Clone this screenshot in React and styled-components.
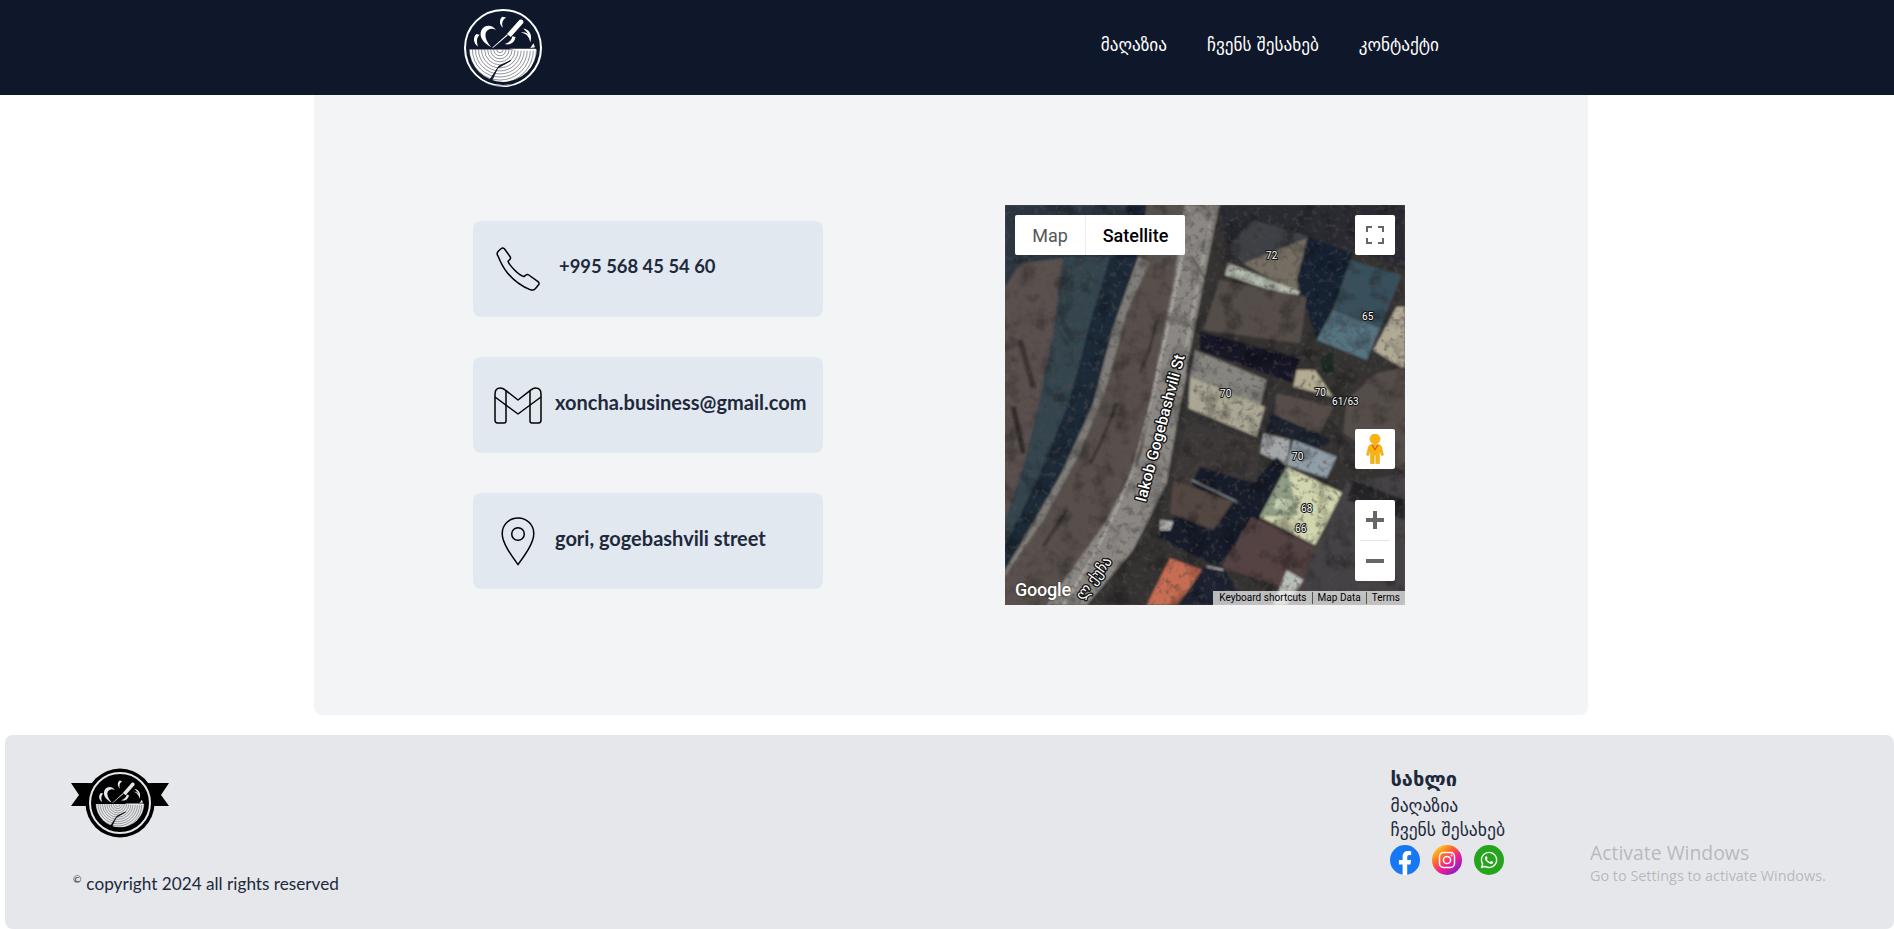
import React, { useId } from "react";
import styled, { createGlobalStyle } from "styled-components";
import { FaWhatsapp } from "react-icons/fa";

const Global = createGlobalStyle`
  html, body { margin: 0; padding: 0; background: #fff; overflow: hidden; }
  * { box-sizing: border-box; }
  body { font-family: "Lato", "DejaVu Sans", sans-serif; color: #111827; }
`;

const Page = styled.div`
  position: relative;
  width: 1894px;
  height: 929px;
  overflow: hidden;
`;

const Header = styled.header`
  height: 95px;
  background: #0f172a;
  display: flex;
  align-items: center;
  padding: 0 455px 0 464px;
  justify-content: space-between;
`;

const Nav = styled.nav`
  display: flex;
  gap: 40px;
  padding-bottom: 6px;
`;

const NavLink = styled.a`
  color: #fff;
  font: 400 17.2px "DejaVu Sans", sans-serif;
`;

const Panel = styled.main`
  margin: 0 0 20px 314px;
  width: 1274px;
  height: 620px;
  background: #f3f4f6;
  border-radius: 0 0 8px 8px;
  display: flex;
  align-items: center;
  padding-left: 159px;
  gap: 182px;
`;

const Cards = styled.div`
  display: flex;
  flex-direction: column;
  gap: 40px;
`;

const Card = styled.div`
  width: 350px;
  height: 96px;
  background: #e2e8f0;
  border-radius: 8px;
  display: flex;
  align-items: center;
  padding-left: 21px;
  gap: ${(p) => p.$gap}px;
`;

const IconSlot = styled.span`
  width: 48px;
  display: flex;
  justify-content: center;
  flex: none;
`;

const CardText = styled.span`
  font: 700 ${(p) => p.$size || 20}px "Lato", sans-serif;
  color: #1e293b;
  padding-bottom: 6px;
`;

const MapBox = styled.div`
  position: relative;
  width: 400px;
  height: 400px;
  overflow: hidden;
  background: #333;
  flex: none;
  font-family: "Roboto", sans-serif;
`;

const MapArt = styled.svg`
  display: block;
  width: 400px;
  height: 400px;
`;

const MapTypes = styled.div`
  position: absolute;
  left: 10px;
  top: 10px;
  height: 40px;
  display: flex;
  background: #fff;
  border-radius: 2px;
`;

const MapType = styled.div`
  width: ${(p) => (p.$active ? 100 : 70)}px;
  display: flex;
  align-items: center;
  justify-content: center;
  font-size: 18px;
  font-weight: ${(p) => (p.$active ? 500 : 400)};
  color: ${(p) => (p.$active ? "#000" : "#565656")};
  border-left: ${(p) => (p.$active ? "1px solid #eee" : "none")};
`;

const MapButton = styled.div`
  position: absolute;
  right: 10px;
  top: ${(p) => p.$top}px;
  width: 40px;
  height: 40px;
  background: #fff;
  border-radius: 2px;
  display: flex;
  align-items: center;
  justify-content: center;
`;

const ZoomBox = styled.div`
  position: absolute;
  right: 10px;
  top: 295px;
  width: 40px;
  height: 81px;
  background: #fff;
  border-radius: 2px;
  display: flex;
  flex-direction: column;
  align-items: center;
`;

const ZoomStep = styled.div`
  height: 40px;
  display: flex;
  align-items: center;
  justify-content: center;
`;

const ZoomRule = styled.div`
  width: 30px;
  height: 1px;
  background: #e6e6e6;
`;

const GoogleMark = styled.div`
  position: absolute;
  left: 10px;
  bottom: 5px;
  color: #fff;
  font: 500 18px "Roboto", sans-serif;
  letter-spacing: -0.2px;
  text-shadow: 0 0 2px rgba(0, 0, 0, 0.6);
`;

const Attribution = styled.div`
  position: absolute;
  right: 0;
  bottom: 0;
  height: 14px;
  width: 192px;
  background: rgba(245, 245, 245, 0.72);
  display: flex;
  align-items: center;
  justify-content: flex-end;
  font-size: 10px;
  color: #000;
  white-space: nowrap;
`;

const AttrItem = styled.span`
  padding: 0 5px;
  line-height: 12px;
  letter-spacing: 0.03px;
  & + & { border-left: 1px solid #555; }
`;

const Footer = styled.footer`
  margin-left: 5px;
  height: 194px;
  background: #e5e7eb;
  border-radius: 8px;
  display: flex;
  justify-content: space-between;
  padding: 33px 0 0 66px;
`;

const Brand = styled.div`
  display: flex;
  flex-direction: column;
`;

const Copy = styled.p`
  margin: 35px 0 0 2px;
  font: 400 17.2px "Lato", sans-serif;
  color: #1e293b;
  white-space: nowrap;
`;

const CopyMark = styled.sup`
  font-size: 10px;
  margin-right: 5px;
  line-height: 0;
`;

const Links = styled.div`
  margin: -2px 389px 0 0;
  display: flex;
  flex-direction: column;
  font-family: "DejaVu Sans", sans-serif;
  color: #1e293b;
`;

const LinkTitle = styled.div`
  font-size: 20px;
  font-weight: 700;
  line-height: 26px;
  margin-bottom: 2px;
`;

const LinkItem = styled.div`
  font-size: 17.6px;
  line-height: 24px;
  white-space: nowrap;
`;

const Socials = styled.div`
  display: flex;
  gap: 12px;
  margin-top: 3px;
`;

const Watermark = styled.div`
  position: absolute;
  left: 1590px;
  top: 839px;
  color: rgba(110, 110, 110, 0.4);
  font-family: "Open Sans", sans-serif;
  pointer-events: none;
`;

const WatermarkTitle = styled.div`
  font-size: 19.4px;
  line-height: 27px;
`;

const WatermarkText = styled.div`
  font-size: 14.4px;
  line-height: 19px;
`;

function LogoMark({ disc, mark }) {
  const id = useId();
  const rings = [];
  for (let r = 4; r < 50; r += 3.9) rings.push(r);
  return (
    <>
      <defs>
        <clipPath id={id}>
          <path d="M6 52 H94 V100 H6Z" />
        </clipPath>
      </defs>
      <g clipPath={`url(#${id})`}>
        <circle cx="50" cy="50" r="43.5" fill={mark} />
        {rings.map((r) => (
          <circle key={r} cx="46" cy="52" r={r} fill="none" stroke={disc} strokeWidth="0.6" />
        ))}
        <path d="M35 93 L43 76 L60 66 L45 73 L33 91Z" fill={disc} stroke={disc} strokeWidth="1.2" />
      </g>
      <g fill={mark}>
        <path d="M35 49 C25 44 19 36 22 28 C25 20 36 19 41 27 C36 24 31 25 28 30 C26 36 30 43 35 49Z" />
        <path d="M71 14 C74 12 77 15 76 18 L60 36 L55 32Z" />
        <path d="M56 34 L37 50 L36.4 49.4 L55 32.6Z" />
        <path d="M49 10 C45 14 45 20 50 24 C48 19 49 14 54 11Z" />
        <path d="M16 32 C11 36 12 44 18 48 C16 42 16 37 20 33Z" />
        <path d="M66 36 C65 43 59 47 52 45 C58 43 61 40 62 35Z" />
        <path d="M76 25 C84 26 88 33 85 43 C84 36 80 31 73 30 C78 29 82 31 84 35 C81 30 79 28 76 25Z" />
        <path d="M89 44 L91 49 L85 50Z" />
        <path d="M58 51 H92 V53.5 H70Z" />
      </g>
    </>
  );
}

const HeaderLogo = () => (
  <svg width="78" height="78" viewBox="0 0 100 100">
    <circle cx="50" cy="50" r="48.7" fill="none" stroke="#fff" strokeWidth="2.6" />
    <LogoMark disc="#0f172a" mark="#fff" />
  </svg>
);

const FooterLogo = () => (
  <svg width="98" height="70" viewBox="0 0 98 70">
    <path d="M0 15 H98 L90 27 L98 38 H0 L8 27Z" fill="#000" />
    <circle cx="49" cy="35" r="34.5" fill="#000" />
    <circle cx="49" cy="35" r="30" fill="none" stroke="#e5e7eb" strokeWidth="2" />
    <svg x="21" y="7" width="56" height="56" viewBox="0 0 100 100">
      <LogoMark disc="#000" mark="#e5e7eb" />
    </svg>
  </svg>
);

const PhoneIcon = () => (
  <svg width="44" height="44" viewBox="0 0 44 44" fill="none" stroke="#000" strokeWidth="1.5" strokeLinejoin="round">
    <path d="M2 9 C0.5 7 1 5.5 2.5 4 L5 1.7 C6.3 0.6 7.6 0.8 8.6 2 L14 9.5 C14.8 10.7 14.6 11.9 13.6 12.8 L12 14.2 C12.6 16 16 20.5 18.5 23 C21.5 26 26 29 28 29.6 L29.6 28.2 C30.6 27.3 31.7 27.2 32.8 28 L42 34.6 C43.3 35.6 43.4 36.8 42.4 38 L39.5 41.5 C38 43.2 36 43.4 34 42.6 C25 39 17 32.5 11.5 26 C7.5 21 4 14 2 9Z" />
  </svg>
);

const MailIcon = () => (
  <svg width="48" height="37" viewBox="0 0 48 37" fill="none" stroke="#000" strokeWidth="1.5" strokeLinejoin="round">
    <path d="M1 33 V7 C1 3 3.5 1 6.5 1 C8 1 9.5 1.6 11 2.8 L24 13 L37 2.8 C38.5 1.6 40 1 41.5 1 C44.5 1 47 3 47 7 V33 C47 35 46 36 44.5 36 H38 C36.5 36 36 35 36 34 V15" />
    <path d="M12 15 V34 C12 35 11.5 36 10 36 H3.5 C2 36 1 35 1 33" />
    <path d="M1 10 L24 27 L47 10" />
    <path d="M12 3.5 V15 M36 3.5 V15" />
  </svg>
);

const PinIcon = () => (
  <svg width="34" height="49" viewBox="0 0 34 49" fill="none" stroke="#000" strokeWidth="1.5" strokeLinejoin="round">
    <path d="M17 1 C8 1 1.2 8 1.2 16.5 C1.2 26 10 38 17 47.6 C24 38 32.8 26 32.8 16.5 C32.8 8 26 1 17 1Z" />
    <circle cx="17" cy="17" r="6.3" />
  </svg>
);

const Facebook = () => (
  <svg width="30" height="30" viewBox="0 0 30 30">
    <circle cx="15" cy="15" r="15" fill="#1877f2" />
    <path d="M12.6 30 V19.4 H8.9 V15 H12.6 V11.7 C12.6 7.9 14.8 5.9 18.2 5.9 C19.9 5.9 21.2 6.2 21.2 6.2 V10 H19.4 C17.6 10 17.2 11.1 17.2 12.2 V15 H21.1 L20.4 19.4 H17.2 V30Z" fill="#fff" />
  </svg>
);

const Instagram = () => (
  <svg width="30" height="30" viewBox="0 0 30 30">
    <defs>
      <linearGradient id="ig-grad" x1="0.1" y1="0.05" x2="0.85" y2="0.95">
        <stop offset="0" stopColor="#fde01a" />
        <stop offset="0.35" stopColor="#fb6a2c" />
        <stop offset="0.62" stopColor="#ee1e8f" />
        <stop offset="1" stopColor="#7a1fd0" />
      </linearGradient>
    </defs>
    <circle cx="15" cy="15" r="15" fill="url(#ig-grad)" />
    <rect x="7.5" y="7.5" width="15" height="15" rx="4" fill="none" stroke="#fff" strokeWidth="1.5" />
    <circle cx="15" cy="15" r="3.6" fill="none" stroke="#fff" strokeWidth="1.5" />
    <circle cx="19.5" cy="10.5" r="1" fill="#fff" />
  </svg>
);

const WhatsApp = () => (
  <svg width="30" height="30" viewBox="0 0 30 30">
    <circle cx="15" cy="15" r="15" fill="#25a51c" />
    <FaWhatsapp x="5.5" y="5.5" size="19" color="#fff" />
  </svg>
);

const mapShapes = [
  ["15,15 440,15 410,175 180,175 60,190 15,260", "#2b363f"],
  ["190,170 400,170 320,380 260,620 170,820 15,1110 15,960 70,800 110,640 160,400", "#34454e"],
  ["330,170 415,170 340,380 280,610 190,810 90,980 15,1110 15,1040 120,820 210,600 270,370", "#1b2939"],
  ["385,15 440,15 415,175 345,175", "#192433"],
  ["415,170 450,185 380,340 320,560 240,760 130,960 15,1130 15,1110 90,990 190,810 280,610 340,380", "#7f7d79"],
  ["440,15 555,15 520,200 450,185 415,170", "#55514e"],
  ["450,185 520,200 470,400 425,600 385,760 295,950 140,1215 50,1215 130,960 240,760 320,560 380,340", "#584f4b"],
  ["555,15 660,15 600,330 540,620 500,850 400,1050 260,1215 140,1215 320,960 425,760 470,500 520,250", "#8b8884"],
  ["660,15 1215,15 1215,1215 260,1215 400,1050 500,850 540,620 600,330", "#353332"],
  ["660,15 1215,15 1215,210 1060,150 920,110 720,190 680,130", "#2b2c33"],
  ["760,60 930,110 730,190 680,140", "#3e3f45"],
  ["730,190 920,115 890,285", "#756e62"],
  ["685,190 900,275 885,295 675,225", "#b6bdb0"],
  ["925,110 1060,160 1000,320 950,420 890,240", "#182033"],
  ["1050,180 1205,225 1140,385 1000,330", "#384f5b"],
  ["1000,330 1140,385 1100,480 950,420", "#557380"],
  ["1190,320 1215,320 1215,510 1120,450", "#b1ab96"],
  ["660,240 920,290 900,430 610,390", "#554e48"],
  ["600,395 900,475 880,550 600,450", "#141925"],
  ["585,450 800,540 780,620 570,530", "#878580"],
  ["570,530 795,620 770,710 565,625", "#aba794"],
  ["890,510 945,510 1000,590 880,560", "#b3ac93"],
  ["830,580 1000,620 960,700 820,650", "#574d48"],
  ["810,640 1000,720 960,745 800,695", "#1f232f"],
  ["560,660 780,730 760,950 520,830", "#3c3937"],
  ["790,700 870,720 860,795 780,760", "#a4a7a8"],
  ["880,720 1010,770 980,835 860,795", "#909ea8"],
  ["600,800 760,850 830,770 860,800 780,950 650,1100 470,1010 520,960", "#181e2c"],
  ["520,840 700,905 640,990 510,940", "#534643"],
  ["860,800 1030,880 945,1035 780,950", "#d2d6ae"],
  ["860,800 895,945 780,950", "#8e9e84"],
  ["830,895 880,900 870,935 820,925", "#c4d0b0"],
  ["755,950 945,1040 900,1180 665,1100", "#554243"],
  ["1040,850 1215,820 1215,1215 900,1180 945,1040", "#444345"],
  ["1060,840 1215,900 1215,960 1040,900", "#272829"],
  ["1130,520 1215,500 1215,820 1030,700 1040,600", "#554e4a"],
  ["510,1075 610,1110 530,1215 440,1215", "#c66d52"],
  ["610,1100 670,1100 730,1215 540,1215", "#1c2230"],
  ["860,1110 910,1140 860,1215 820,1215", "#b8bdb7"],
  ["480,960 520,965 510,990 480,990", "#cfd2cd"],
  ["960,480 1000,450 1000,520 970,520", "#1f2a22"],
];

const mapLines = [
  ["M552 140 C520 300 470 560 400 800 C350 950 270 1090 190 1215", "#cfcdc7", 3],
  ["M640 30 C610 170 580 320 545 520", "#b3b0aa", 4],
  ["M660 20 C630 160 600 320 560 520", "#33302d", 6],
  ["M575 170 L630 260", "#3a3733", 4],
  ["M470 360 C460 420 440 470 420 520", "#3a3430", 8],
  ["M350 610 C320 690 300 740 270 790", "#3a3430", 9],
  ["M130 1040 L200 930", "#3a3430", 10],
  ["M60 420 L100 560", "#3a3430", 16],
  ["M40 620 L70 760", "#2f2a28", 14],
  ["M575 840 L710 905", "#c9cbc6", 3],
  ["M620 1100 L670 1110", "#d0d0cc", 4],
];

const buildingNumbers = [
  ["72", 815, 176],
  ["65", 1103, 361],
  ["70", 677, 591],
  ["70", 961, 587],
  ["61/63", 1036, 616],
  ["70", 893, 779],
  ["68", 920, 935],
  ["66", 902, 995],
];

const MapLabel = styled.text`
  font-family: "Roboto", "DejaVu Sans", sans-serif;
  font-size: ${(p) => p.$size}px;
  font-weight: ${(p) => p.$weight || 400};
  fill: #fff;
  stroke: #111;
  stroke-width: ${(p) => p.$halo}px;
  paint-order: stroke;
  stroke-linejoin: round;
`;

const SatelliteMap = () => (
  <MapArt viewBox="15 15 1200 1200">
    <defs>
      <filter id="soft" x="0" y="0" width="100%" height="100%">
        <feGaussianBlur stdDeviation="3.5" />
      </filter>
      <filter id="grain" x="0" y="0" width="100%" height="100%">
        <feTurbulence type="fractalNoise" baseFrequency="0.018" numOctaves="4" seed="9" />
        <feColorMatrix values="0 0 0 0 0  0 0 0 0 0  0 0 0 0 0  0 0 0 3 -1.45" />
      </filter>
      <filter id="speckle" x="0" y="0" width="100%" height="100%">
        <feTurbulence type="fractalNoise" baseFrequency="0.06" numOctaves="2" seed="3" />
        <feColorMatrix values="0 0 0 0 0.08  0 0 0 0 0.07  0 0 0 0 0.07  0 0 0 5 -2.7" />
      </filter>
    </defs>
    <rect x="15" y="15" width="1200" height="1200" fill="#5a504d" />
    <g filter="url(#soft)">
      {mapShapes.map(([points, fill]) => (
        <polygon key={points} points={points} fill={fill} />
      ))}
      {mapLines.map(([d, stroke, width]) => (
        <path key={d} d={d} stroke={stroke} strokeWidth={width} fill="none" />
      ))}
    </g>
    <rect x="15" y="15" width="1200" height="1200" filter="url(#grain)" opacity="0.28" />
    <rect x="15" y="15" width="1200" height="1200" filter="url(#speckle)" opacity="0.4" />
    {buildingNumbers.map(([t, x, y]) => (
      <MapLabel key={`${t}${x}`} x={x} y={y} textAnchor="middle" $size={30} $halo={6}>{t}</MapLabel>
    ))}
    <MapLabel x="0" y="0" $size={47} $weight={500} $halo={8} transform="translate(437 908) rotate(-75)">Iakob Gogebashvili St</MapLabel>
    <MapLabel x="0" y="0" $size={44} $halo={8} transform="translate(248 1203) rotate(-53)">ლ ქუჩა</MapLabel>
  </MapArt>
);

export default function App() {
  return (
    <Page>
      <Global />
      <Header>
        <HeaderLogo />
        <Nav>
          <NavLink>მაღაზია</NavLink>
          <NavLink>ჩვენს შესახებ</NavLink>
          <NavLink>კონტაქტი</NavLink>
        </Nav>
      </Header>
      <Panel>
        <Cards>
          <Card $gap={17}>
            <IconSlot><PhoneIcon /></IconSlot>
            <CardText $size={18.4}>+995 568 45 54 60</CardText>
          </Card>
          <Card $gap={13}>
            <IconSlot><MailIcon /></IconSlot>
            <CardText>xoncha.business@gmail.com</CardText>
          </Card>
          <Card $gap={13}>
            <IconSlot><PinIcon /></IconSlot>
            <CardText>gori, gogebashvili street</CardText>
          </Card>
        </Cards>
        <MapBox>
          <SatelliteMap />
          <MapTypes>
            <MapType>Map</MapType>
            <MapType $active>Satellite</MapType>
          </MapTypes>
          <MapButton $top={10}>
            <svg width="18" height="18" viewBox="0 0 18 18" fill="none" stroke="#666" strokeWidth="2">
              <path d="M1 6 V1 H6 M12 1 H17 V6 M17 12 V17 H12 M6 17 H1 V12" />
            </svg>
          </MapButton>
          <MapButton $top={224}>
            <svg width="18" height="30" viewBox="0 0 18 30">
              <circle cx="9" cy="5" r="5" fill="#fbb40e" stroke="#e19f00" strokeWidth="0.6" />
              <path d="M6 10.5 H12 C14 10.5 15 11.5 15.5 13 L17.5 21 L15.5 21.6 L13.4 16 V29.5 H9.8 V21 H8.2 V29.5 H4.6 V16 L2.5 21.6 L0.5 21 L2.5 13 C3 11.5 4 10.5 6 10.5Z" fill="#fbb40e" stroke="#d99600" strokeWidth="0.5" />
              <path d="M6 11 L9 15.5 L12 11" fill="none" stroke="#d9572b" strokeWidth="1.3" />
            </svg>
          </MapButton>
          <ZoomBox>
            <ZoomStep>
              <svg width="18" height="18" viewBox="0 0 18 18"><path d="M7 0 H11 V7 H18 V11 H11 V18 H7 V11 H0 V7 H7Z" fill="#666" /></svg>
            </ZoomStep>
            <ZoomRule />
            <ZoomStep>
              <svg width="18" height="18" viewBox="0 0 18 18"><path d="M0 7 H18 V11 H0Z" fill="#666" /></svg>
            </ZoomStep>
          </ZoomBox>
          <GoogleMark>Google</GoogleMark>
          <Attribution>
            <AttrItem>Keyboard shortcuts</AttrItem>
            <AttrItem>Map Data</AttrItem>
            <AttrItem>Terms</AttrItem>
          </Attribution>
        </MapBox>
      </Panel>
      <Footer>
        <Brand>
          <FooterLogo />
          <Copy><CopyMark>©</CopyMark>copyright 2024 all rights reserved</Copy>
        </Brand>
        <Links>
          <LinkTitle>სახლი</LinkTitle>
          <LinkItem>მაღაზია</LinkItem>
          <LinkItem>ჩვენს შესახებ</LinkItem>
          <Socials>
            <Facebook />
            <Instagram />
            <WhatsApp />
          </Socials>
        </Links>
      </Footer>
      <Watermark>
        <WatermarkTitle>Activate Windows</WatermarkTitle>
        <WatermarkText>Go to Settings to activate Windows.</WatermarkText>
      </Watermark>
    </Page>
  );
}
